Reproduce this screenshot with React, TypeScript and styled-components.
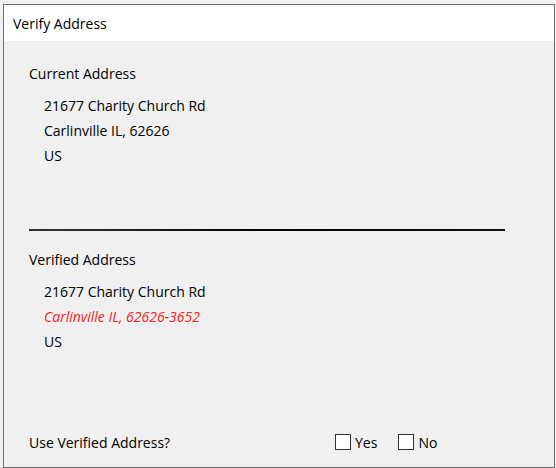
import { createGlobalStyle } from "styled-components";
import styled from "styled-components";

const GlobalStyle = createGlobalStyle`
  html, body {
    margin: 0;
    padding: 0;
    background: #f0f0f0;
  }
  * {
    box-sizing: border-box;
  }
`;

const Backdrop = styled.div`
  width: 556px;
  height: 468px;
  padding: 4px 1px 0 3px;
  background: #f0f0f0;
  overflow: hidden;
  font-family: "Open Sans", "Noto Sans", sans-serif;
  font-size: 14px;
  color: #000;
`;

const Dialog = styled.div`
  height: 464px;
  border: 1px solid #6b6b6b;
  background: #f0f0f0;
  display: flex;
  flex-direction: column;
`;

const TitleBar = styled.div`
  height: 36px;
  background: #fff;
  display: flex;
  align-items: center;
  padding-left: 9px;
`;

const Body = styled.div`
  flex: 1;
  display: flex;
  flex-direction: column;
  padding: 21px 49px 0 25px;
`;

const SectionTitle = styled.div`
  height: 24px;
  line-height: 24px;
`;

const AddressList = styled.div`
  padding: 7px 0 0 15px;
`;

const AddressLine = styled.div<{ $changed?: boolean }>`
  height: 25px;
  line-height: 25px;
  color: ${(p) => (p.$changed ? "#ff1a1a" : "#000")};
  font-style: ${(p) => (p.$changed ? "italic" : "normal")};
`;

const Separator = styled.hr`
  margin: 61px 0 17px 0;
  border: none;
  height: 2px;
  background: linear-gradient(to right, #333, #000 50%, #111);
`;

const Footer = styled.div`
  margin-top: auto;
  height: 50px;
  display: flex;
  align-items: center;
`;

const Question = styled.div`
  width: 306px;
`;

const Option = styled.label`
  display: flex;
  align-items: center;
  gap: 4px;
  margin-right: 21px;
`;

const Box = styled.span`
  width: 16px;
  height: 16px;
  border: 1px solid #333;
  background: #fff;
`;

type Address = { street: string; city: string; country: string };

const current: Address = {
  street: "21677 Charity Church Rd",
  city: "Carlinville IL, 62626",
  country: "US",
};

const verified: Address = {
  street: "21677 Charity Church Rd",
  city: "Carlinville IL, 62626-3652",
  country: "US",
};

export default function App() {
  return (
    <>
      <GlobalStyle />
      <Backdrop>
        <Dialog>
          <TitleBar>Verify Address</TitleBar>
          <Body>
            <SectionTitle>Current Address</SectionTitle>
            <AddressList>
              <AddressLine>{current.street}</AddressLine>
              <AddressLine>{current.city}</AddressLine>
              <AddressLine>{current.country}</AddressLine>
            </AddressList>
            <Separator />
            <SectionTitle>Verified Address</SectionTitle>
            <AddressList>
              <AddressLine>{verified.street}</AddressLine>
              <AddressLine $changed={verified.city !== current.city}>
                {verified.city}
              </AddressLine>
              <AddressLine>{verified.country}</AddressLine>
            </AddressList>
            <Footer>
              <Question>Use Verified Address?</Question>
              <Option>
                <Box />
                Yes
              </Option>
              <Option>
                <Box />
                No
              </Option>
            </Footer>
          </Body>
        </Dialog>
      </Backdrop>
    </>
  );
}
